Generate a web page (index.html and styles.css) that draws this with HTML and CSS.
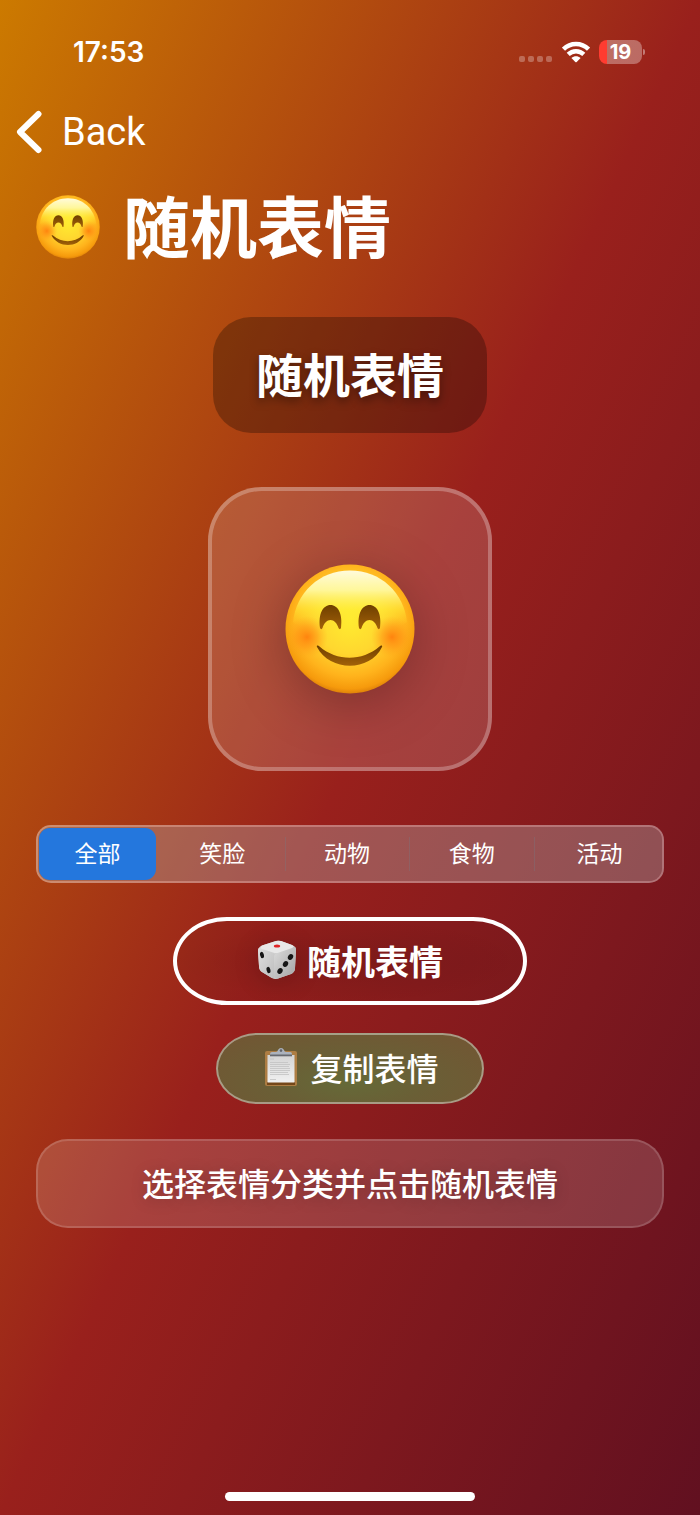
FILE: index.html
```html
<!DOCTYPE html>
<html lang="zh-CN">
    <head>
        <title>随机表情</title>
        <meta charset="UTF-8">
        <meta name="viewport" content="width=device-width, initial-scale=1.0">
        <link rel="stylesheet" href="styles.css">
    </head>
    <body>
        <!-- shared drawings -->
        <svg class="defs" aria-hidden="true">
            <defs>
                <radialGradient id="faceBase" cx="0.5" cy="0.43" r="0.58">
                    <stop offset="0" stop-color="#ffec30"/>
                    <stop offset="0.45" stop-color="#ffd72f"/>
                    <stop offset="0.75" stop-color="#ffb31c"/>
                    <stop offset="0.92" stop-color="#f69a0c"/>
                    <stop offset="1" stop-color="#d87b08"/>
                </radialGradient>
                <linearGradient id="faceShine" x1="0" y1="0" x2="0" y2="1">
                    <stop offset="0" stop-color="#fffbdc"/>
                    <stop offset="0.3" stop-color="#fff9a0" stop-opacity="0.95"/>
                    <stop offset="0.6" stop-color="#fff23a" stop-opacity="0.5"/>
                    <stop offset="0.85" stop-color="#ffe32e" stop-opacity="0"/>
                </linearGradient>
                <radialGradient id="cheek">
                    <stop offset="0" stop-color="#ff7d0c" stop-opacity="0.9"/>
                    <stop offset="0.5" stop-color="#ff8c12" stop-opacity="0.5"/>
                    <stop offset="1" stop-color="#ffa51a" stop-opacity="0"/>
                </radialGradient>
                <linearGradient id="feature" x1="0" y1="0" x2="0" y2="1">
                    <stop offset="0" stop-color="#6f3f00"/>
                    <stop offset="1" stop-color="#a26108"/>
                </linearGradient>
                <symbol id="smile" viewBox="0 0 130 130">
                    <circle cx="65" cy="65" r="64.5" fill="url(#faceBase)"/>
                    <path d="M65 6.500C96 6.500 119 29 122 58C110 68 88 72 65 72S20 68 8 58C11 29 34 6.500 65 6.500Z" fill="url(#faceShine)"/>
                    <circle cx="22" cy="73" r="21" fill="url(#cheek)"/>
                    <circle cx="107" cy="73" r="21" fill="url(#cheek)"/>
                    <path d="M35 64C33 50 38 41 45.500 41S58 50 56 64C55.500 65.500 54 65.500 53.500 64C52 59 49 56 45.500 56S39 59 37.500 64C37 65.500 35.500 65.500 35 64Z" fill="url(#feature)"/>
                    <path d="M74 64C72 50 77 41 84.500 41S97 50 95 64C94.500 65.500 93 65.500 92.500 64C91 59 88 56 84.500 56S78 59 76.500 64C76 65.500 74.500 65.500 74 64Z" fill="url(#feature)"/>
                    <path d="M32 83C31 81.500 33 81 34.500 82.500C52 97.500 77 97.500 94.500 82.500C96 81 98 81.500 97 83C85 108 45 108 32 83Z" fill="url(#feature)"/>
                </symbol>
            </defs>
        </svg>

        <div class="status-bar">
            <span class="time">17:53</span>
            <div class="indicators">
                <svg class="signal" viewBox="0 0 34 7" fill="#fff" fill-opacity="0.28">
                    <rect x="0" y="0" width="6" height="6" rx="2"/>
                    <rect x="9" y="0" width="6" height="6" rx="2"/>
                    <rect x="18" y="0" width="6" height="6" rx="2"/>
                    <rect x="27" y="0" width="6" height="6" rx="2"/>
                </svg>
                <svg class="wifi" viewBox="0 0 28 22" fill="none" stroke="#fff" stroke-width="4.400">
                    <path d="M1.500 8.200C8.500 1.200 19.500 1.200 26.500 8.200"/>
                    <path d="M6.200 13.400C10.600 9.100 17.400 9.100 21.800 13.400"/>
                    <path d="M9.400 17C12.200 14.600 15.800 14.600 18.600 17L14.700 21Q14 21.700 13.300 21Z" fill="#fff" stroke="none"/>
                </svg>
                <div class="battery"><span>19</span></div>
            </div>
        </div>

        <nav class="nav">
            <a class="back" href="#">
                <svg viewBox="0 0 26 44" fill="none" stroke="#fff" stroke-width="6" stroke-linecap="round" stroke-linejoin="round">
                    <path d="M22.500 4L4 22L22.500 40"/>
                </svg>
                Back
            </a>
        </nav>

        <main>
            <h1>
                <svg class="title-face" role="img"><use href="#smile"/></svg>
                随机表情
            </h1>

            <h2 class="badge">随机表情</h2>

            <div class="emoji-card">
                <svg role="img"><use href="#smile"/></svg>
            </div>

            <div class="segments" role="radiogroup">
                <label><input type="radio" name="category" checked><span>全部</span></label>
                <label><input type="radio" name="category"><span>笑脸</span></label>
                <label><input type="radio" name="category"><span>动物</span></label>
                <label><input type="radio" name="category"><span>食物</span></label>
                <label><input type="radio" name="category"><span>活动</span></label>
            </div>

            <button type="button" class="random">
                <svg viewBox="0 0 40 40">
                    <defs>
                        <linearGradient id="dieLeft" x1="0" y1="0" x2="1" y2="1">
                            <stop offset="0" stop-color="#dedede"/>
                            <stop offset="1" stop-color="#bdbdbd"/>
                        </linearGradient>
                        <linearGradient id="dieRight" x1="0" y1="0" x2="1" y2="1">
                            <stop offset="0" stop-color="#dcdcdc"/>
                            <stop offset="1" stop-color="#a4a4a4"/>
                        </linearGradient>
                    </defs>
                    <path d="M19 1Q21 0.500 24 1L35 5Q39 6.500 39 10L38 28Q38 32 34 34L21 38.500Q18 39.500 15 38L5 32Q2 30 2 26L1 11Q1 7 5 5.500Z" fill="#d0d0d0"/>
                    <path d="M4 8L15 12Q18 13 18 17L18 35Q18 40 14 37.500L5 32Q2 30 2 26L1 11Q1 7 4 8Z" fill="url(#dieLeft)"/>
                    <path d="M22 12L36 7Q39 6 39 10L38 28Q38 32 34 34L21 38.500Q17 40 17 35L17 17Q17 14 22 12Z" fill="url(#dieRight)"/>
                    <path d="M19 1Q21 0.500 24 1L35 5Q38 6.500 35 8L22 12.500Q19 13.500 16 12.500L5 9Q2 7.500 5 5.500Z" fill="#e8e8e8"/>
                    <ellipse cx="20" cy="6" rx="3.200" ry="1.600" fill="#e02426"/>
                    <g fill="#161616">
                        <ellipse cx="5" cy="15" rx="1.900" ry="3.200" transform="rotate(-14 5 15)"/>
                        <ellipse cx="11.500" cy="30" rx="1.900" ry="3.200" transform="rotate(-14 11.500 30)"/>
                        <ellipse cx="33.500" cy="17" rx="2.500" ry="3.100" transform="rotate(30 33.500 17)"/>
                        <ellipse cx="28.500" cy="24" rx="2.500" ry="3.100" transform="rotate(30 28.500 24)"/>
                        <ellipse cx="23" cy="31" rx="2.500" ry="3.100" transform="rotate(30 23 31)"/>
                    </g>
                </svg>
                随机表情
            </button>

            <button type="button" class="copy">
                <svg viewBox="0 0 34 40">
                    <defs>
                        <linearGradient id="sheet" x1="0" y1="0" x2="0" y2="1">
                            <stop offset="0" stop-color="#d4d4d4"/>
                            <stop offset="1" stop-color="#f0f0f0"/>
                        </linearGradient>
                    </defs>
                    <rect x="1" y="4" width="32" height="35" rx="2" fill="#ad7d43"/>
                    <rect x="3" y="35" width="28" height="3" fill="#754719"/>
                    <rect x="3.500" y="8" width="27" height="27.500" fill="url(#sheet)"/>
                    <g stroke="#c2c2c2" stroke-width="0.800" fill="none">
                        <path d="M6 12H10M6 15.500H24M6 17.500H26M6 19.500H25M6 21.500H26M6 23.500H26M6 25.500H24M6 27.500H25M6 32.500H12"/>
                    </g>
                    <path d="M6 9V7Q6 5 8 5H12Q13.500 5 14 3Q15 1 17 1T20 3Q20.500 5 22 5H26Q28 5 28 7V9Z" fill="#abb2bd"/>
                    <rect x="6" y="7.500" width="22" height="1.800" fill="#686a70"/>
                    <circle cx="17" cy="3.600" r="1.300" fill="#60636a"/>
                </svg>
                复制表情
            </button>

            <p class="message">选择表情分类并点击随机表情</p>
        </main>

        <div class="home-indicator"></div>
    </body>
</html>
```
FILE: styles.css
```css
* {
    box-sizing: border-box;
}

body {
    margin: 0;
    min-height: 100vh;
    display: flex;
    flex-direction: column;
    font-family: Inter, "Noto Sans CJK SC", sans-serif;
    color: #fff;
    background: linear-gradient(to bottom right, #cc7a00, #99201c 50%, #611020);
}

.defs {
    position: absolute;
    width: 0;
    height: 0;
}

.status-bar {
    display: flex;
    justify-content: space-between;
    align-items: center;
    height: 104px;
    padding: 0 54px 0 73px;
}

.time {
    font-size: 28px;
    font-weight: 600;
}

.indicators {
    display: flex;
    align-items: center;
    gap: 9px;
}

.signal {
    width: 34px;
    height: 7px;
    margin-top: 15px;
}

.wifi {
    width: 28px;
    height: 22px;
}

.battery {
    position: relative;
    width: 43px;
    height: 24px;
    margin-right: 4px;
    border-radius: 8px;
    background: linear-gradient(to right, #ff3b30 8px, rgba(255, 255, 255, 0.32) 8px);
    font-size: 20px;
    font-weight: 700;
    line-height: 24px;
    text-align: center;
}

.battery::after {
    content: "";
    position: absolute;
    left: 44px;
    top: 9px;
    width: 2px;
    height: 6px;
    border-radius: 0 2px 2px 0;
    background: rgba(255, 255, 255, 0.4);
}

.nav {
    display: flex;
    height: 56px;
    padding-left: 16px;
}

.back {
    display: flex;
    align-items: center;
    gap: 20px;
    font-family: Roboto, sans-serif;
    font-size: 38px;
    color: #fff;
    text-decoration: none;
}

.back svg {
    width: 26px;
    height: 44px;
}

main {
    display: flex;
    flex-direction: column;
    align-items: center;
    padding: 0 36px;
}

h1 {
    display: flex;
    align-items: center;
    align-self: stretch;
    gap: 23px;
    margin: 29px 0 48px;
    font-size: 67px;
    font-weight: 700;
    line-height: 80px;
}

.title-face {
    width: 64px;
    height: 64px;
    margin-bottom: 4px;
}

.badge {
    margin: 0 0 54px;
    padding: 31px 43px 29px;
    border-radius: 38px;
    background: rgba(0, 0, 0, 0.28);
    font-size: 47px;
    font-weight: 700;
    line-height: 56px;
    text-shadow: 0 4px 10px rgba(0, 0, 0, 0.4);
}

.emoji-card {
    display: flex;
    justify-content: center;
    align-items: center;
    width: 284px;
    height: 284px;
    margin-bottom: 54px;
    border: 4px solid rgba(255, 255, 255, 0.26);
    border-radius: 54px;
    background: rgba(255, 255, 255, 0.15);
}

.emoji-card svg {
    width: 130px;
    height: 130px;
    filter: drop-shadow(0 10px 26px rgba(0, 0, 0, 0.25));
}

.segments {
    display: flex;
    align-self: stretch;
    height: 58px;
    margin-bottom: 34px;
    padding: 1px 0;
    border: 2px solid rgba(255, 255, 255, 0.4);
    border-radius: 15px;
    background: rgba(180, 180, 180, 0.36);
    background-clip: padding-box;
}

.segments label {
    position: relative;
    flex: 1;
    display: flex;
    cursor: pointer;
}

.segments label + label + label::before {
    content: "";
    position: absolute;
    left: -3px;
    top: 9px;
    bottom: 9px;
    width: 1px;
    background: rgba(120, 120, 128, 0.35);
}

.segments input {
    position: absolute;
    opacity: 0;
}

.segments span {
    flex: 1;
    margin: 0 7px 0 1px;
    border-radius: 11px;
    font-size: 23px;
    line-height: 52px;
    text-align: center;
}

.segments label:last-child span {
    margin-right: 1px;
}

.segments input:checked + span {
    background: #2477dd;
}

button {
    display: flex;
    justify-content: center;
    align-items: center;
    gap: 10px;
    font-family: inherit;
    color: #fff;
    cursor: pointer;
}

.random {
    height: 88px;
    margin-bottom: 28px;
    padding: 0 80px 2px;
    border: 4px solid #fff;
    border-radius: 54px / 44px;
    background: radial-gradient(closest-side, rgba(0, 0, 0, 0.13), rgba(0, 0, 0, 0.05));
    font-size: 34px;
    font-weight: 700;
}

.random svg {
    width: 40px;
    height: 40px;
    filter: drop-shadow(0 4px 12px rgba(0, 0, 0, 0.15));
}

.copy {
    height: 71px;
    margin-bottom: 35px;
    padding: 0 43px 4px 46px;
    gap: 12px;
    border: 2px solid rgba(255, 255, 255, 0.4);
    border-radius: 42px / 36px;
    background: radial-gradient(ellipse at 50% 70%, #656a38, #6a5f36 40%, #735533);
    font-size: 32px;
    font-weight: 500;
}

.copy svg {
    width: 34px;
    height: 40px;
}

.message {
    align-self: stretch;
    margin: 0;
    padding: 20px 20px 18px;
    border: 2px solid rgba(255, 255, 255, 0.15);
    border-radius: 32px;
    background: rgba(255, 255, 255, 0.15);
    font-size: 32px;
    font-weight: 500;
    line-height: 47px;
    text-align: center;
    text-shadow: 0 2px 16px rgba(0, 0, 0, 0.2);
}

.home-indicator {
    width: 250px;
    height: 9px;
    margin: auto auto 14px;
    border-radius: 5px;
    background: #fff;
}
```
